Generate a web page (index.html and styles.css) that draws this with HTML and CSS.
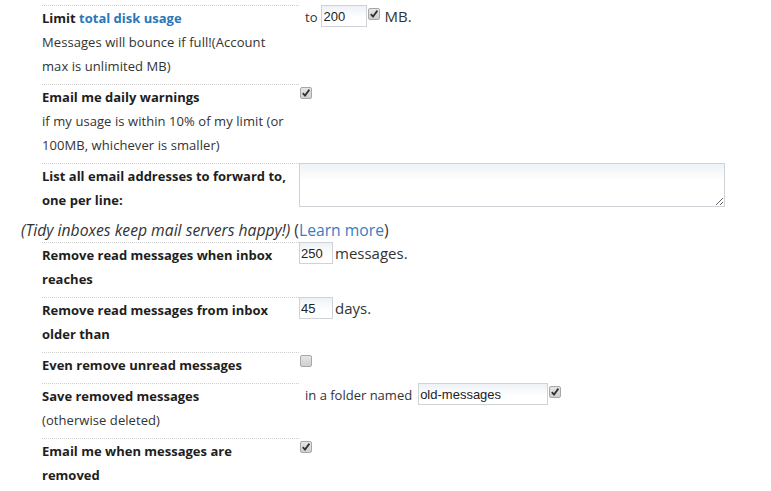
FILE: index.html
```html
<!DOCTYPE html>
<html>
<head>
<meta charset="utf-8">
<link rel="stylesheet" href="styles.css">
</head>
<body>
<div class="page">
  <div class="row">
    <div class="label"><b>Limit <a class="link" href="#">total disk usage</a></b><br>Messages will bounce if full!(Account max is unlimited MB)</div>
    <div class="field"><span class="pre">to</span><input class="txt w46" type="text" value="200"><input class="cb" type="checkbox" checked><span class="big">MB.</span></div>
  </div>
  <div class="row">
    <div class="label"><b>Email me daily warnings</b><br>if my usage is within 10% of my limit (or 100MB, whichever is smaller)</div>
    <div class="field"><input class="cb" type="checkbox" checked></div>
  </div>
  <div class="row">
    <div class="label"><b>List all email addresses to forward to, one per line:</b></div>
    <div class="field"><textarea class="area"></textarea></div>
  </div>
  <p class="tidy"><i>(Tidy inboxes keep mail servers happy!)</i> (<a class="more" href="#">Learn more</a>)</p>
  <div class="row">
    <div class="label"><b>Remove read messages when inbox reaches</b></div>
    <div class="field"><input class="txt w34" type="text" value="250"><span class="big">messages.</span></div>
  </div>
  <div class="row">
    <div class="label"><b>Remove read messages from inbox older than</b></div>
    <div class="field"><input class="txt w34" type="text" value="45"><span class="big">days.</span></div>
  </div>
  <div class="row">
    <div class="label"><b>Even remove unread messages</b></div>
    <div class="field"><input class="cb" type="checkbox"></div>
  </div>
  <div class="row">
    <div class="label"><b>Save removed messages</b><br>(otherwise deleted)</div>
    <div class="field"><span class="pre folder">in a folder named</span><input class="txt w130" type="text" value="old-messages"><input class="cb" type="checkbox" checked></div>
  </div>
  <div class="row">
    <div class="label"><b>Email me when messages are removed</b></div>
    <div class="field"><input class="cb" type="checkbox" checked></div>
  </div>
</div>
</body>
</html>
```

FILE: styles.css
```css
html, body {
  margin: 0;
  padding: 0;
  background: #fff;
}
body {
  font-family: "Open Sans", Lato, sans-serif;
  font-size: 13px;
  color: #333;
}
.page {
  padding: 5px 0 0 21px;
}
.row {
  display: grid;
  grid-template-columns: 257px 1fr;
  margin-left: 21px;
}
.label {
  border-top: 1px dotted #cfcfcf;
  line-height: 24px;
  padding-bottom: 6px;
  padding-right: 12px;
  letter-spacing: 0.07px;
}
.label b {
  color: #1e1e1e;
  font-weight: 700;
  letter-spacing: 0;
}
.link {
  color: #2a76b8;
  text-decoration: none;
}
.field {
  display: flex;
  align-items: flex-start;
  line-height: 22px;
}
.pre {
  padding-left: 6px;
  padding-right: 4px;
  font-size: 13px;
  line-height: 24px;
  color: #333;
}
.folder {
  padding-right: 6px;
}
.big {
  font-size: 15px;
  line-height: 22px;
  color: #333;
  padding-left: 2px;
}
.txt {
  box-sizing: border-box;
  height: 22px;
  margin: 0;
  padding: 0 1px;
  border: 1px solid #cfd3d7;
  background: linear-gradient(#eef2f6, #ffffff 60%);
  font-family: "Liberation Sans", Arial, sans-serif;
  font-size: 13px;
  color: #222;
  outline: none;
}
.w46 { width: 46px; }
.w34 { width: 34px; }
.w130 { width: 130px; }
.cb {
  -webkit-appearance: none;
  appearance: none;
  box-sizing: border-box;
  width: 12px;
  height: 12px;
  margin: 3px 2px 0 1px;
  border: 1px solid #a8a8a8;
  border-radius: 2px;
  background: linear-gradient(#e6e6e6, #cfcfcf);
  flex: none;
}
.cb:checked {
  background: url("data:image/svg+xml;utf8,<svg xmlns='http://www.w3.org/2000/svg' width='10' height='10' viewBox='0 0 10 10'><path d='M1.8 5.2 L4 7.6 L8.4 1.6' fill='none' stroke='%23333' stroke-width='1.8'/></svg>") center/10px 10px no-repeat, linear-gradient(#e6e6e6, #cfcfcf);
}
.area {
  box-sizing: border-box;
  width: 426px;
  height: 44px;
  margin: 0;
  border: 1px solid #cfd3d7;
  background: linear-gradient(#eef2f6, #ffffff 40%);
  resize: both;
  outline: none;
}
.tidy {
  margin: 0;
  line-height: 24px;
  font-size: 15.7px;
  color: #333;
}
.more {
  color: #3a7cc0;
  text-decoration: none;
}
```
